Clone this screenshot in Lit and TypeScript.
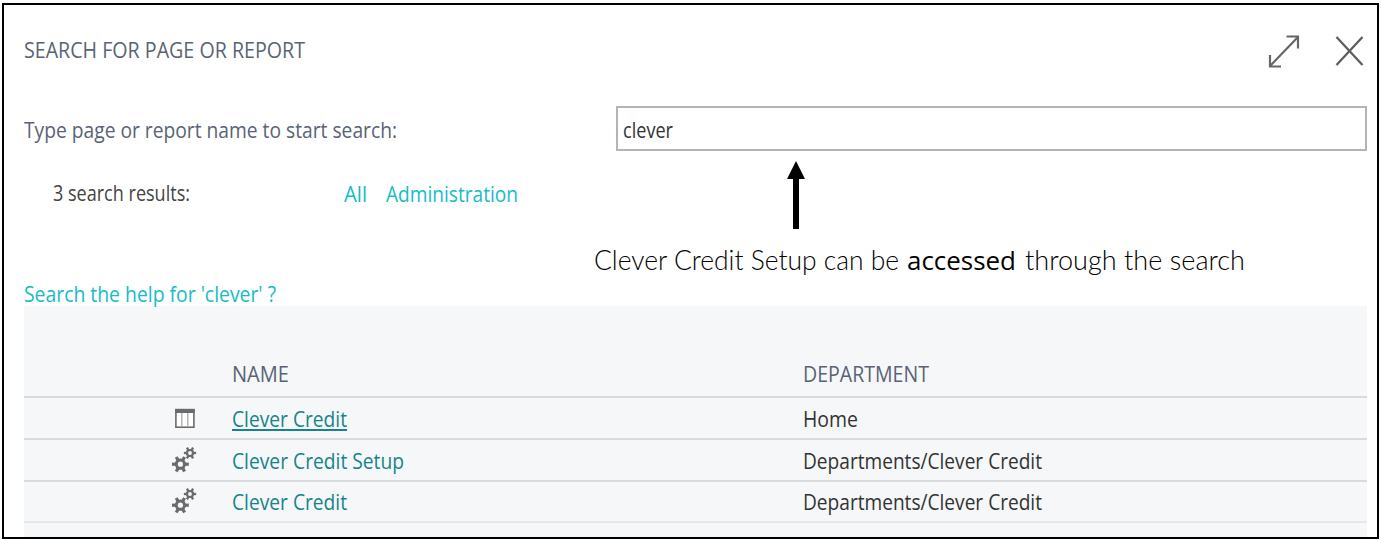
import { LitElement, html, css, svg } from "lit";
import { customElement, property, query } from "lit/decorators.js";

/** A single line of text condensed or widened to an exact advance width. */
@customElement("fit-text")
class FitText extends LitElement {
  @property({ type: Number }) width = 100;
  @query(".line") line!: HTMLElement;

  static styles = css`
    :host { display: inline-block; white-space: nowrap; vertical-align: top; }
    .box { display: block; }
    .line { display: inline-block; transform-origin: 0 50%; }
  `;

  render() {
    return html`<span class="box" style="width:${this.width}px"><span class="line"><slot></slot></span></span>`;
  }

  updated() {
    this.line.style.transform = "none";
    const natural = this.line.getBoundingClientRect().width;
    if (natural) this.line.style.transform = `scaleX(${this.width / natural})`;
  }
}

const tooth = (a: number) => svg`<path d="M-1.6 -8.4H1.6V-4H-1.6Z" transform="rotate(${a})"></path>`;
const gear = (x: number, y: number, s: number) => svg`
  <g transform="translate(${x} ${y}) scale(${s})">
    ${[30, 90, 150, 210, 270, 330].map(tooth)}
    <circle r="4.1" fill="none" stroke="#6b6b6b" stroke-width="3"></circle>
  </g>`;

const gearsIcon = html`<svg class="icon" width="26" height="28" viewBox="0 0 26 28" fill="#6b6b6b">
  ${gear(9.4, 18.2, 1)}${gear(19, 7, 0.73)}
</svg>`;

const tableIcon = html`<svg class="icon" width="26" height="28" viewBox="0 0 26 28">
  <rect x="4.9" y="5.6" width="18" height="17.6" fill="#fff" stroke="#6b6b6b" stroke-width="1.6"></rect>
  <path d="M4.1 5H23.7V9H4.1Z" fill="#6b6b6b"></path>
  <path d="M10.8 9V23M16.8 9V23" stroke="#aaa" stroke-width="1.3"></path>
</svg>`;

const rows = [
  { icon: tableIcon, name: "Clever Credit", nameW: 115, dept: "Home", deptW: 55, active: true },
  { icon: gearsIcon, name: "Clever Credit Setup", nameW: 172, dept: "Departments/Clever Credit", deptW: 239, active: false },
  { icon: gearsIcon, name: "Clever Credit", nameW: 115, dept: "Departments/Clever Credit", deptW: 239, active: false },
];

@customElement("app-root")
class AppRoot extends LitElement {
  static styles = css`
    :host {
      display: block; box-sizing: border-box; height: 540px; padding: 3px 2px 1px 2px;
      background: #fff; font: 22px/30px "Open Sans", "Noto Sans", sans-serif; color: #333;
    }
    .dialog {
      box-sizing: border-box; width: 1377px; height: 536px; border: 2px solid #000;
      padding: 0 10px 0 20px; overflow: hidden; display: flex; flex-direction: column;
    }
    .head { display: flex; height: 89px; align-items: center; color: #596374; }
    .title { flex: 1; padding-bottom: 2px; }
    .tools { display: flex; gap: 33px; padding: 2px 1px 0 0; align-items: center; }
    .tools svg, .icon, .arrow { display: block; }
    .search { display: flex; justify-content: space-between; height: 57px; flex: none; padding-top: 12px; box-sizing: border-box; color: #596374; }
    .prompt { padding-top: 8px; }
    .field {
      box-sizing: border-box; width: 751px; height: 45px; border: 2px solid #b4b4b4;
      padding: 6px 0 0 5px; color: #333;
    }
    .middle { display: flex; height: 127px; flex: none; }
    .filters { width: 570px; display: flex; padding: 26px 0 0 29px; box-sizing: border-box; }
    .count { width: 291px; color: #444; }
    .links { display: flex; gap: 19px; padding-top: 1px; color: #14bdc6; }
    .note { padding-top: 10px; }
    .arrow { margin-left: 193px; }
    .caption { display: flex; color: #000; font: 300 27px/36px Lato, sans-serif; padding-top: 13px; }
    .strong { font: 400 26px/36px "Open Sans", sans-serif; padding: 0 9px 0 8px; }
    .help { height: 28px; flex: none; color: #14bdc6; }
    .panel { flex: 1; background: #f6f7f9; }
    .row {
      display: grid; grid-template-columns: 208px 571px 1fr; align-items: center;
      box-sizing: border-box; height: 41.75px; border-bottom: 2px solid #d8dade;
    }
    .row.last { border-color: #e5e7e9; }
    .row.columns { height: 92px; align-items: end; padding-bottom: 8px; color: #596374; }
    .icon { margin-left: 147px; }
    .name { color: #168489; }
    .active { display: inline-block; height: 28px; }
    .active fit-text { height: 26px; border-bottom: 2px solid #168489; }
  `;

  render() {
    return html`
      <div class="dialog">
        <div class="head">
          <div class="title"><fit-text width="281">SEARCH FOR PAGE OR REPORT</fit-text></div>
          <div class="tools">
            <svg width="34" height="36" viewBox="0 0 34 36" fill="none" stroke="#666" stroke-width="2.2">
              <path d="M3 33L31 4M19.5 3.5H31V15.5M3 22V33.5H14"></path>
            </svg>
            <svg width="32" height="32" viewBox="0 0 32 32" fill="none" stroke="#5e5e5e" stroke-width="2.3">
              <path d="M2.5 2L28.5 30M28.5 2L2.5 30"></path>
            </svg>
          </div>
        </div>
        <div class="search">
          <div class="prompt"><fit-text width="373">Type page or report name to start search:</fit-text></div>
          <div class="field"><fit-text width="50">clever</fit-text></div>
        </div>
        <div class="middle">
          <div class="filters">
            <div class="count"><fit-text width="137">3 search results:</fit-text></div>
            <div class="links"><fit-text width="23">All</fit-text><fit-text width="132">Administration</fit-text></div>
          </div>
          <div class="note">
            <svg class="arrow" width="18" height="68" viewBox="0 0 18 68">
              <path d="M9 0L18 18H12V68H6V18H0Z" fill="#000"></path>
            </svg>
            <div class="caption">
              <fit-text width="305">Clever Credit Setup can be</fit-text>
              <span class="strong"><fit-text width="109">accessed</fit-text></span>
              <fit-text width="220">through the search</fit-text>
            </div>
          </div>
        </div>
        <div class="help"><fit-text width="252">Search the help for 'clever' ?</fit-text></div>
        <div class="panel">
          <div class="row columns">
            <span></span>
            <fit-text width="57">NAME</fit-text>
            <fit-text width="126">DEPARTMENT</fit-text>
          </div>
          ${rows.map((r, i) => html`
            <div class="row ${i === rows.length - 1 ? "last" : ""}">
              ${r.icon}
              <div class="name"><span class=${r.active ? "active" : ""}><fit-text width=${r.nameW}>${r.name}</fit-text></span></div>
              <fit-text width=${r.deptW}>${r.dept}</fit-text>
            </div>`)}
        </div>
      </div>`;
  }
}
